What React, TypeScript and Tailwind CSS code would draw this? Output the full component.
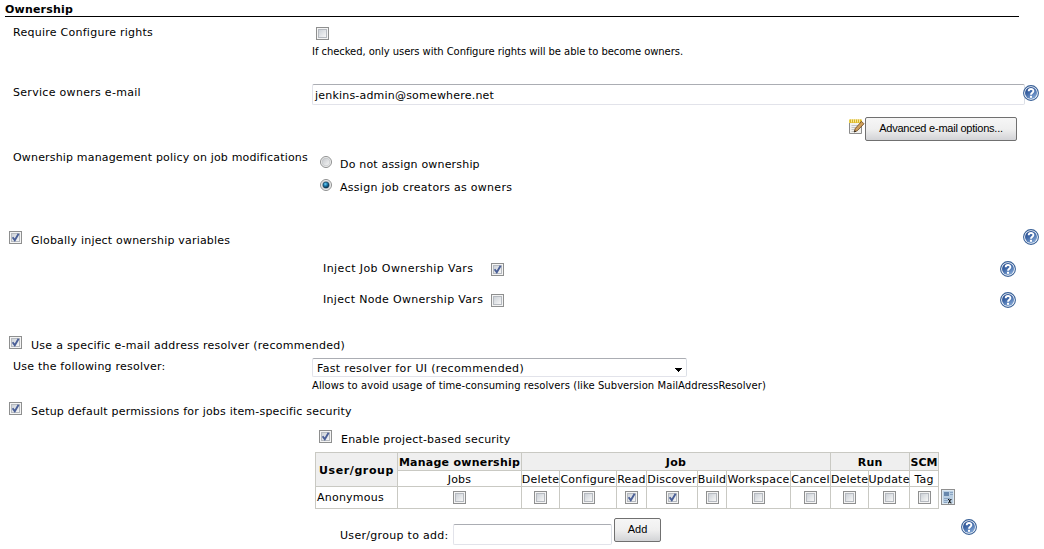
import React from "react";

function Check({ on = false, className = "" }: { on?: boolean; className?: string }) {
  return (
    <span role="checkbox" aria-checked={on} className={`block size-[13px] shrink-0 border border-[#8e8f8f] bg-[#f4f4f4] p-px ${className}`}>
      <span className="block size-[9px] border border-[#b6bac0] bg-linear-to-br from-[#cdd2d8] to-[#f6f6f6]">
        {on && (
          <svg viewBox="0 0 9 9" className="-mt-px -ml-px block size-[9px] overflow-visible">
            <path d="M1.6 4.2 L3.8 7.3 L7.6 0.8" fill="none" stroke="#4a5f97" strokeWidth="1.9" />
          </svg>
        )}
      </span>
    </span>
  );
}

function Radio({ on = false, className = "" }: { on?: boolean; className?: string }) {
  return (
    <svg viewBox="0 0 12 12" className={`block size-3 shrink-0 ${className}`}>
      <defs>
        <linearGradient id="radioFill" x1="0" y1="0" x2="1" y2="1">
          <stop offset="0" stopColor="#c3c6ca" />
          <stop offset="1" stopColor="#f8f8f8" />
        </linearGradient>
        <radialGradient id="radioDot" cx="0.4" cy="0.35" r="0.6">
          <stop offset="0" stopColor="#6fd0f5" />
          <stop offset="0.5" stopColor="#1d7cae" />
          <stop offset="1" stopColor="#0c3450" />
        </radialGradient>
      </defs>
      <circle cx="6" cy="6" r="5.5" fill="#f4f4f4" stroke="#8e8f8f" />
      <circle cx="6" cy="6" r="3.9" fill="url(#radioFill)" stroke="#c0c3c6" strokeWidth="0.7" />
      {on && <circle cx="6" cy="6" r="3.1" fill="url(#radioDot)" stroke="#123a58" strokeWidth="0.6" />}
    </svg>
  );
}

function Help({ className = "" }: { className?: string }) {
  return (
    <svg viewBox="0 0 16 16" className={`block size-4 shrink-0 ${className}`}>
      <defs>
        <linearGradient id="helpFill" x1="0" y1="0" x2="0.6" y2="1">
          <stop offset="0" stopColor="#1f4486" />
          <stop offset="0.5" stopColor="#3f68a8" />
          <stop offset="1" stopColor="#7fa3d2" />
        </linearGradient>
      </defs>
      <circle cx="8" cy="8" r="7.4" fill="#fff" stroke="#386097" strokeWidth="1.1" />
      <circle cx="8" cy="8" r="6" fill="url(#helpFill)" />
      <path d="M5.7 6.3 C5.7 3.3 10.4 3.3 10.4 6 C10.4 7.7 8 7.8 8 9.8" fill="none" stroke="#fff" strokeWidth="1.9" />
      <rect x="7" y="10.8" width="2" height="2" fill="#fff" />
    </svg>
  );
}

function Notepad({ className = "" }: { className?: string }) {
  return (
    <svg viewBox="0 0 16 16" className={`block size-4 shrink-0 ${className}`}>
      <path d="M0.5 3 H12.5 V14.5 H0.5 Z" fill="#f1f1ee" stroke="#8c8c8c" />
      <path d="M2.5 6.5h7M2.5 8.5h5M2.5 10.5h3M2.5 12.5h3" stroke="#b9b9b9" strokeWidth="0.8" />
      <path d="M0 0.5 H13 V4 H0 Z" fill="#ecd04a" />
      <path d="M1.5 0.4v3.4M3.5 0.4v3.4M5.5 0.4v3.4M7.5 0.4v3.4M9.5 0.4v3.4M11.5 0.4v3.4" stroke="#cfa51c" strokeWidth="0.7" />
      <path d="M2.5 1v2M4.5 1v2M6.5 1v2M8.5 1v2M10.5 1v2" stroke="#fff0a0" strokeWidth="0.8" />
      <path d="M12.6 2.4 L15 4.8 L8.2 11.8 L5.2 13 L6.2 9.6 Z" fill="#d0a05c" stroke="#65401b" strokeWidth="0.8" />
      <path d="M5 13.3 L5.8 11.2 L7.2 12.4 Z" fill="#222" />
    </svg>
  );
}

function InvertIcon({ className = "" }: { className?: string }) {
  return (
    <svg viewBox="0 0 14 16" className={`block h-4 w-3.5 shrink-0 ${className}`}>
      <rect x="0.5" y="0.5" width="13" height="15" fill="#b9cee2" stroke="#8f8f8f" />
      <rect x="1.5" y="1.5" width="11" height="13" fill="none" stroke="#dde8f1" />
      <rect x="3" y="3" width="5" height="4" fill="#6888ad" />
      <path d="M9 3.5h3M9 5.5h3M3 9.5h6M3 11.5h4M3 13.5h3" stroke="#8aa5c3" />
      <path d="M7 10.5h1l1.5 3.5h1M10.5 10.5 h-1 L7.8 14 H7" fill="none" stroke="#111" strokeWidth="1" />
    </svg>
  );
}

function T({ className = "", children }: { className?: string; children: React.ReactNode }) {
  return <span className={`block h-[14px] shrink-0 leading-[16px] whitespace-nowrap ${className}`}>{children}</span>;
}

const columns = [
  { name: "Jobs", on: false },
  { name: "Delete", on: false },
  { name: "Configure", on: false },
  { name: "Read", on: true },
  { name: "Discover", on: true },
  { name: "Build", on: false },
  { name: "Workspace", on: false },
  { name: "Cancel", on: false },
  { name: "Delete", on: false },
  { name: "Update", on: false },
  { name: "Tag", on: false },
];

const head = "border border-[#c9c9c3] bg-[#efefef] p-0 text-center font-bold";
const cell = "border border-[#c9c9c3] p-0";

export default function App() {
  return (
    <main className="h-[549px] w-[1044px] overflow-hidden bg-white font-['DejaVu_Sans',sans-serif] text-[11px] text-black">
      <header className="ml-[5px] h-[17px] w-[1014px] border-b border-black pt-[2px]">
        <T className="font-bold tracking-[0.2px]">Ownership</T>
      </header>

      <section className="flex h-[67px]">
        <T className="mt-2 ml-[13px] w-[299px] tracking-[0.26px]">Require Configure rights</T>
        <div className="pt-[10px]">
          <Check className="ml-1" />
          <T className="mt-1 text-[10px] tracking-[-0.06px]">If checked, only users with Configure rights will be able to become owners.</T>
        </div>
      </section>

      <section className="flex h-[33px]">
        <T className="mt-[1px] ml-[13px] w-[299px] tracking-[0.3px]">Service owners e-mail</T>
        <div className="h-[21px] w-[713px] rounded-[2px] border border-[#e2e3ea] border-t-[#abadb3] border-r-[#dbdfe6] pt-[3px] pl-[2px]">
          <T className="tracking-[0.2px]">jenkins-admin@somewhere.net</T>
        </div>
        <Help className="mt-px -ml-[2px]" />
      </section>

      <section className="flex h-[33px] pl-[849px]">
        <Notepad className="mt-[2px]" />
        <button className="flex h-6 w-[152px] justify-center rounded-[2px] border border-[#707070] bg-linear-to-b from-[#f6f6f6] via-[#efefef] to-[#d2d3d6] pt-[2px] font-['Liberation_Sans',sans-serif]">
          <T className="tracking-[-0.23px]">Advanced e-mail options...</T>
        </button>
      </section>

      <section className="flex h-[79px]">
        <T className="ml-[13px] w-[307px] tracking-[0.17px]">Ownership management policy on job modifications</T>
        <div className="flex flex-col gap-[9px] pt-[6px]">
          <div className="flex h-[14px]">
            <Radio />
            <T className="mt-px ml-2 tracking-[0.18px]">Do not assign ownership</T>
          </div>
          <div className="flex h-[14px]">
            <Radio on />
            <T className="mt-px ml-2 tracking-[0.28px]">Assign job creators as owners</T>
          </div>
        </div>
      </section>

      <section className="flex h-[32px] pl-[9px]">
        <Check on className="mt-[2px]" />
        <T className="mt-1 ml-[9px] w-[992px] tracking-[0.2px]">Globally inject ownership variables</T>
        <Help />
      </section>
      <section className="flex h-[31px] pl-[323px]">
        <T className="w-[168px] tracking-[0.41px]">Inject Job Ownership Vars</T>
        <Check on className="mt-[2px] mr-[496px]" />
        <Help />
      </section>
      <section className="flex h-[44px] pl-[323px]">
        <T className="w-[168px] tracking-[0.32px]">Inject Node Ownership Vars</T>
        <Check className="mt-[2px] mr-[496px]" />
        <Help />
      </section>

      <section className="flex h-[22px] pl-[9px]">
        <Check on />
        <T className="mt-[2px] ml-[9px] tracking-[0.27px]">Use a specific e-mail address resolver (recommended)</T>
      </section>
      <section className="flex h-[44px]">
        <T className="mt-[1px] ml-[13px] w-[299px] tracking-[0.22px]">Use the following resolver:</T>
        <div>
          <div className="flex h-[19px] w-[375px] justify-between rounded-[2px] border border-[#e2e3ea] border-t-[#abadb3] border-r-[#dbdfe6] pt-[2px] pr-1 pl-1">
            <T className="tracking-[0.35px]">Fast resolver for UI (recommended)</T>
            <svg viewBox="0 0 7 4" className="mt-[7px] h-1 w-[7px]" shapeRendering="crispEdges">
              <path d="M0 0H7V1H6V2H5V3H4V4H3V3H2V2H1V1H0Z" />
            </svg>
          </div>
          <T className="mt-[1px] text-[10px] tracking-[0.07px]">Allows to avoid usage of time-consuming resolvers (like Subversion MailAddressResolver)</T>
        </div>
      </section>
      <section className="flex h-7 pl-[9px]">
        <Check on />
        <T className="mt-[2px] ml-[9px] tracking-[0.2px]">Setup default permissions for jobs item-specific security</T>
      </section>
      <section className="flex h-[22px] pl-[319px]">
        <Check on />
        <T className="mt-[2px] ml-[9px] tracking-[0.2px]">Enable project-based security</T>
      </section>

      <section className="flex h-[66px] pl-[315px]">
        <table className="h-[57px] w-[624px] table-fixed border-collapse">
          <colgroup>
            <col className="w-[82px]" />
            <col className="w-[124px]" />
            <col className="w-[38px]" />
            <col className="w-[57px]" />
            <col className="w-[30px]" />
            <col className="w-[51px]" />
            <col className="w-[29px]" />
            <col className="w-[64px]" />
            <col className="w-[40px]" />
            <col className="w-[38px]" />
            <col className="w-[41px]" />
            <col className="w-[29px]" />
          </colgroup>
          <tbody>
            <tr className="h-[18px]">
              <th rowSpan={2} className={head}><T className="tracking-[0.6px]">User/group</T></th>
              <th className={head}><T className="tracking-[0.25px]">Manage ownership</T></th>
              <th colSpan={7} className={head}><T className="tracking-[0.4px]">Job</T></th>
              <th colSpan={2} className={head}><T className="tracking-[0.2px]">Run</T></th>
              <th className={head}><T>SCM</T></th>
            </tr>
            <tr className="h-[16px]">
              {columns.map((c, i) => (
                <td key={i} className={cell}>
                  <div className="flex justify-center"><T className="tracking-[0.2px]">{c.name}</T></div>
                </td>
              ))}
            </tr>
            <tr className="h-[22px]">
              <td className={cell}><T className="-mt-[2px] pl-px tracking-[0.22px]">Anonymous</T></td>
              {columns.map((c, i) => (
                <td key={i} className={cell}><Check on={c.on} className="mx-auto" /></td>
              ))}
            </tr>
          </tbody>
        </table>
        <InvertIcon className="mt-[37px] ml-[2px]" />
      </section>

      <section className="flex pl-[340px]">
        <T className="mt-[10px] w-[113px] tracking-[0.3px]">User/group to add:</T>
        <div className="mt-[6px] h-[21px] w-[159px] rounded-[2px] border border-[#e2e3ea] border-t-[#abadb3] border-r-[#dbdfe6]" />
        <button className="ml-[2px] flex h-6 w-[47px] justify-center rounded-[2px] border border-[#707070] bg-linear-to-b from-[#f6f6f6] via-[#efefef] to-[#d2d3d6] pt-[2px] font-['Liberation_Sans',sans-serif]">
          <T>Add</T>
        </button>
        <Help className="mt-px ml-[300px]" />
      </section>
    </main>
  );
}
